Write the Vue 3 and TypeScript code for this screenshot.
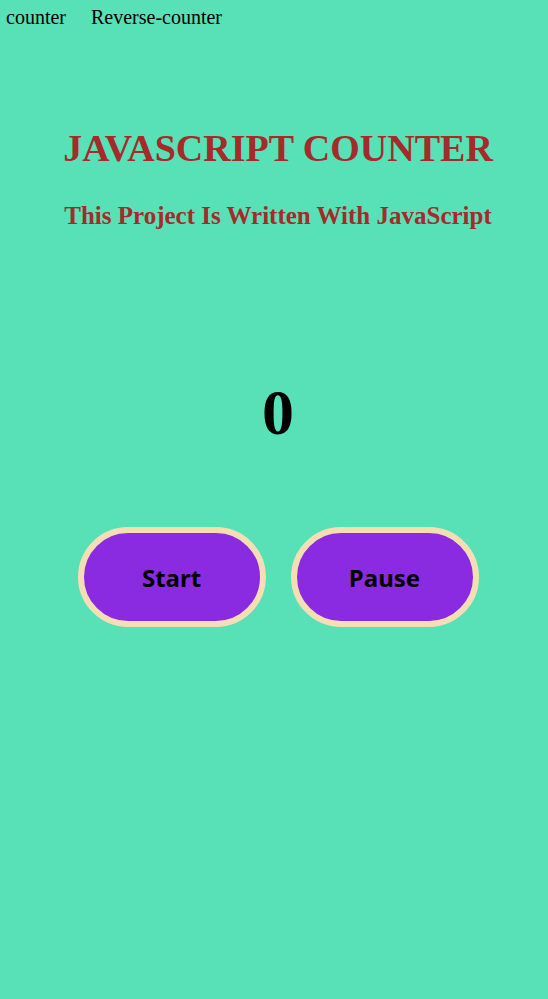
<script setup lang="ts">
import { onUnmounted, ref } from 'vue'

const count = ref(0)
let timer: number | undefined

function start(): void {
  if (timer !== undefined) return
  timer = window.setInterval(() => {
    count.value += 1
  }, 1000)
}

function pause(): void {
  window.clearInterval(timer)
  timer = undefined
}

onUnmounted(pause)
</script>

<template>
  <div class="page">
    <nav class="nav">
      <a href="#counter">counter</a>
      <a href="#reverse-counter">Reverse-counter</a>
    </nav>
    <main class="main">
      <h1 class="title">JAVASCRIPT COUNTER</h1>
      <h2 class="subtitle">This Project Is Written With JavaScript</h2>
      <p class="count">{{ count }}</p>
      <div class="actions">
        <button type="button" class="button" @click="start">Start</button>
        <button type="button" class="button" @click="pause">Pause</button>
      </div>
    </main>
  </div>
</template>

<style>
body {
  background: #58e1b7;
}
</style>

<style scoped>
.page {
  min-height: 100vh;
  font-family: "Liberation Serif", "Times New Roman", serif;
  color: #000;
}

.nav {
  display: flex;
  gap: 25px;
  padding: 6px;
  font-size: 20px;
  line-height: 22px;
}

.nav a {
  color: inherit;
  text-decoration: none;
}

.main {
  display: flex;
  flex-direction: column;
  align-items: center;
  padding: 92px 0 0 8px;
  text-align: center;
}

.title,
.subtitle {
  margin: 0;
  color: brown;
}

.title {
  font-size: 38px;
  line-height: 44px;
}

.subtitle {
  margin-top: 32px;
  font-size: 25px;
  line-height: 28px;
}

.count {
  margin: 146px 0 0;
  font-size: 64px;
  font-weight: bold;
  line-height: 74px;
}

.actions {
  display: flex;
  gap: 25px;
  margin-top: 77px;
}

.button {
  box-sizing: border-box;
  width: 188px;
  height: 100px;
  padding: 0;
  border: 6px solid wheat;
  border-radius: 50px;
  background: blueviolet;
  color: #000;
  font-family: "Noto Sans", "DejaVu Sans", sans-serif;
  font-size: 24px;
  font-weight: bold;
}
</style>
